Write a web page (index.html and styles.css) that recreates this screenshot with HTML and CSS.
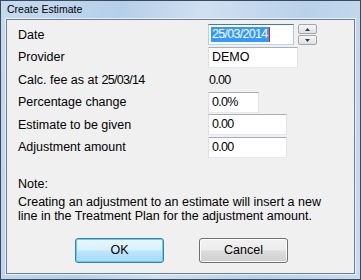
FILE: index.html
```html
<!DOCTYPE html>
<html>
<head>
  <title>Create Estimate</title>
  <link rel="stylesheet" href="styles.css">
</head>
<body>
  <div class="window">
    <div class="titlebar">Create Estimate</div>
    <div class="client">
      <div class="fields">
        <label>Date</label>
        <div class="cell">
          <div class="box date-box focused"><span class="sel num">25/03/2014</span><span class="caret"></span></div>
          <div class="spin">
            <div class="spin-btn"><svg width="5" height="3" viewBox="0 0 5 3"><path d="M0 3 L2.5 0 L5 3 Z" fill="#1c3f7a"/></svg></div>
            <div class="spin-btn"><svg width="5" height="3" viewBox="0 0 5 3"><path d="M0 0 L2.5 3 L5 0 Z" fill="#1c3f7a"/></svg></div>
          </div>
        </div>

        <label>Provider</label>
        <div class="cell"><div class="box provider-box">DEMO</div></div>

        <label>Calc. fee as at <span class="num">25/03/14</span></label>
        <div class="cell"><span class="value num">0.00</span></div>

        <label>Percentage change</label>
        <div class="cell"><div class="box pct-box num">0.0%</div></div>

        <label>Estimate to be given</label>
        <div class="cell"><div class="box amount-box num">0.00</div></div>

        <label>Adjustment amount</label>
        <div class="cell"><div class="box amount-box num">0.00</div></div>
      </div>

      <div class="note">
        <div class="note-title">Note:</div>
        <p>Creating an adjustment to an estimate will insert a new line in the Treatment Plan for the adjustment amount.</p>
      </div>

      <div class="buttons">
        <button class="btn default">OK</button>
        <button class="btn">Cancel</button>
      </div>
    </div>
  </div>
</body>
</html>
```

FILE: styles.css
```css
body {
  margin: 0;
  font-family: "Liberation Sans", Arial, sans-serif;
  font-size: 12.5px;
  color: #000;
}
.window {
  width: 361px;
  height: 280px;
  box-sizing: border-box;
  border: 1px solid #3a4a5c;
  background: linear-gradient(100deg, #c5daf0 0%, #b6cfe9 30%, #cfe0f2 50%, #b9d1ea 75%, #c8dcf0 100%);
  padding: 0 5px 5px 5px;
  display: flex;
  flex-direction: column;
}
.titlebar {
  height: 18px;
  line-height: 17px;
  padding-left: 1px;
  font-size: 10.5px;
  color: #000;
}
.client {
  flex: 1;
  background: #f0f0f0;
  border: 1px solid #6f7f91;
  box-shadow: 0 0 0 1px #e8f0f8;
  padding: 4px 0 0 11px;
}
.fields {
  display: grid;
  grid-template-columns: 190px 1fr;
  grid-auto-rows: 21px;
  row-gap: 1.6px;
  align-items: center;
}
.num {
  letter-spacing: -0.7px;
}
.cell {
  display: flex;
  align-items: center;
  height: 21px;
}
.box {
  box-sizing: border-box;
  height: 21px;
  line-height: 19px;
  padding-left: 3px;
  background: #fff;
  border: 1px solid;
  border-color: #abadb3 #e2e3ea #e3e9ef #dbdfe6;
}
.focused {
  border-color: #3d7bad #a4c9e3 #b7d9ed #b5cfe7;
}
.date-box {
  width: 86px;
  display: flex;
  align-items: center;
  padding-left: 2px;
}
.sel {
  background: #3399ff;
  color: #fff;
  line-height: 15px;
  padding: 0 1px;
}
.caret {
  width: 1px;
  height: 15px;
  background: #e02020;
}
.spin {
  margin-left: 4px;
  width: 19px;
  height: 21px;
  display: flex;
  flex-direction: column;
  gap: 1px;
}
.spin-btn {
  flex: 1;
  box-sizing: border-box;
  border: 1px solid #a7a7a7;
  border-radius: 2px;
  background: linear-gradient(#f6f6f6, #e0e0e0);
  display: flex;
  align-items: center;
  justify-content: center;
}
.provider-box {
  width: 90px;
}
.pct-box {
  width: 51px;
}
.amount-box {
  width: 79px;
}
.value {
  padding-left: 1px;
}
.note {
  margin-top: 19px;
}
.note-title {
  line-height: 15px;
  margin-bottom: 3px;
}
.note p {
  margin: 0;
  line-height: 14px;
  width: 320px;
}
.buttons {
  display: flex;
  gap: 35px;
  margin-top: 15px;
  padding-left: 57px;
}
.btn {
  width: 89px;
  height: 25px;
  font-family: "Liberation Sans", Arial, sans-serif;
  font-size: 12.5px;
  color: #000;
  border: 1px solid #707070;
  border-radius: 3px;
  background: linear-gradient(#f2f2f2 0%, #ebebeb 48%, #dddddd 52%, #cfcfcf 100%);
  box-shadow: inset 0 0 0 1px #fcfcfc;
  padding: 0;
}
.btn.default {
  border-color: #3c7fb1;
  background: linear-gradient(#eaf6fd 0%, #d9f0fc 48%, #bee6fd 52%, #a7d9f5 100%);
  box-shadow: inset 0 0 0 1px #5ed0f5;
}
```
